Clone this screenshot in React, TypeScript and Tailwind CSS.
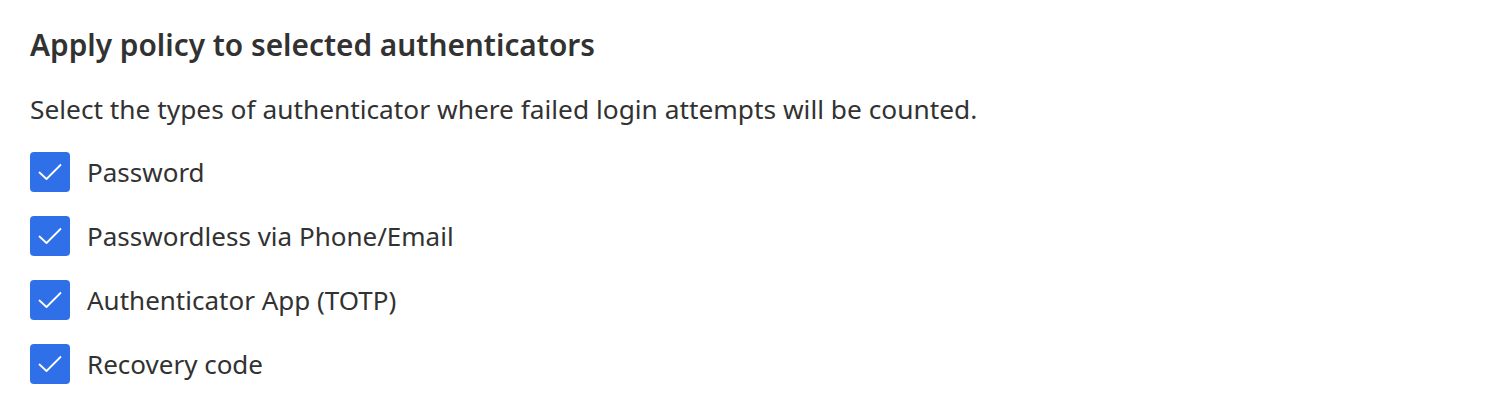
import React from "react";

const items = [
  "Password",
  "Passwordless via Phone/Email",
  "Authenticator App (TOTP)",
  "Recovery code",
];

function Check() {
  return (
    <div className="w-[40px] h-[40px] rounded-[4px] bg-[#2f6fe8] flex items-center justify-center shrink-0">
      <svg width="40" height="40" viewBox="0 0 40 40" fill="none">
        <path d="M9.5 20.5 L16.5 27 L30.5 13" stroke="white" strokeWidth="1.8" strokeLinecap="round" strokeLinejoin="round" />
      </svg>
    </div>
  );
}

export default function App() {
  return (
    <div className="w-[1498px] h-[412px] bg-white pl-[30px] pt-[27px] text-[#323232]" style={{ fontFamily: '"Noto Sans", "Open Sans", sans-serif' }}>
      <h2 className="text-[29.8px] font-semibold leading-[36px]">Apply policy to selected authenticators</h2>
      <p className="mt-[30px] text-[26.3px] leading-[32px]">Select the types of authenticator where failed login attempts will be counted.</p>
      <div className="mt-[27px] flex flex-col gap-[24px]">
        {items.map((t) => (
          <div key={t} className="flex items-center gap-[17px] h-[40px]">
            <Check />
            <span className="text-[26px] leading-[32px]">{t}</span>
          </div>
        ))}
      </div>
    </div>
  );
}
